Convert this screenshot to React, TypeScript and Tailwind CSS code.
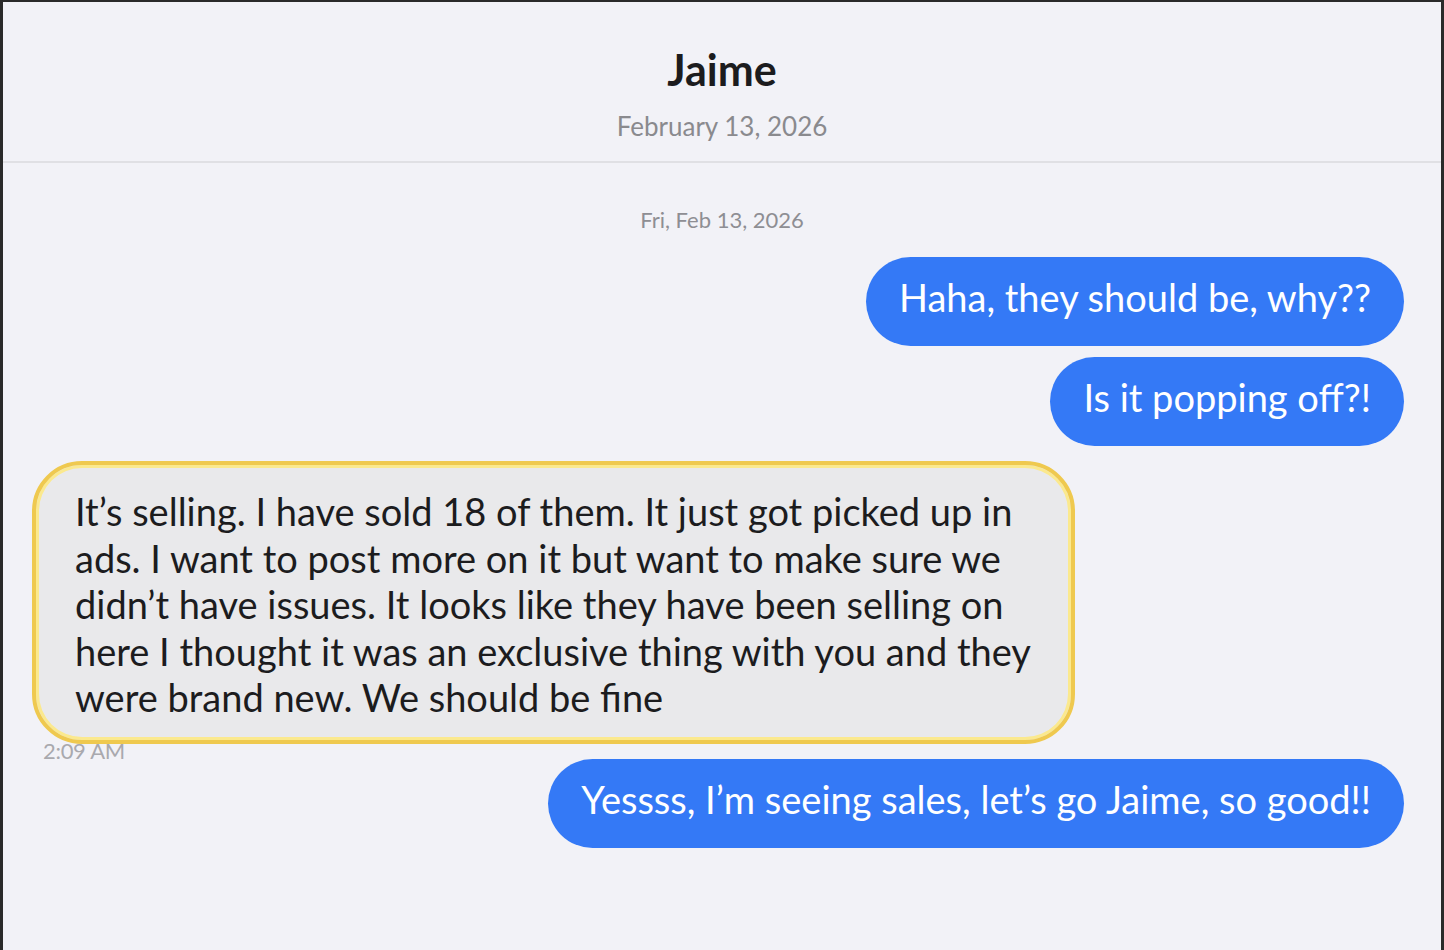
import React from "react";

type Message = {
  id: number;
  from: "me" | "them";
  text: string;
  time?: string;
};

const messages: Message[] = [
  { id: 1, from: "me", text: "Haha, they should be, why??" },
  { id: 2, from: "me", text: "Is it popping off?!" },
  {
    id: 3,
    from: "them",
    text: "It’s selling. I have sold 18 of them. It just got picked up in ads. I want to post more on it but want to make sure we didn’t have issues. It looks like they have been selling on here I thought it was an exclusive thing with you and they were brand new. We should be fine",
    time: "2:09 AM",
  },
  { id: 4, from: "me", text: "Yessss, I’m seeing sales, let’s go Jaime, so good!!" },
];

const Bubble = ({ msg }: { msg: Message }) => {
  if (msg.from === "me") {
    return (
      <div className="flex justify-end">
        <div className="bg-[#3479f6] text-white text-[38px] leading-[47px] rounded-full px-[33px] pt-[17px] pb-[25px]">
          {msg.text}
        </div>
      </div>
    );
  }
  return (
    <div className="relative flex flex-col items-start mt-[4px] mb-[4px]">
      <div className="w-[1043px] bg-[#e9e9eb] text-[#1c1c1e] text-[38px] leading-[46.5px] rounded-[50px] border-[4px] border-[#efc94f] shadow-[inset_0_0_0_3px_#fbe98e] pl-[39px] pr-[30px] pt-[23px] pb-[19px]">
        {msg.text}
      </div>
      {msg.time && (
        <div className="absolute left-[11px] top-full mt-[-5px] text-[22px] text-[#a9a9ae] leading-[24px] tracking-[-0.3px]">
          {msg.time}
        </div>
      )}
    </div>
  );
};

export default function App() {
  return (
    <div className="w-[1444px] h-[950px] bg-[#2a2a2a] pl-[3px] pt-[2px] pr-[3px] font-['Lato',sans-serif]">
      <div className="h-full bg-[#f2f2f7] flex flex-col">
        <div className="h-[161px] border-b-2 border-[#e0e0e4] flex flex-col items-center pt-[42px]">
          <div className="text-[43px] font-bold text-[#1c1c1e] leading-[52px]">Jaime</div>
          <div className="text-[26px] text-[#8a8a8e] leading-[32px] mt-[14px]">February 13, 2026</div>
        </div>
        <div className="text-center text-[22px] text-[#8e8e93] leading-[26px] mt-[44px]">Fri, Feb 13, 2026</div>
        <div className="flex flex-col gap-[11px] pl-[29px] pr-[37px] mt-[24px]">
          {messages.map((m) => (
            <Bubble key={m.id} msg={m} />
          ))}
        </div>
      </div>
    </div>
  );
}
